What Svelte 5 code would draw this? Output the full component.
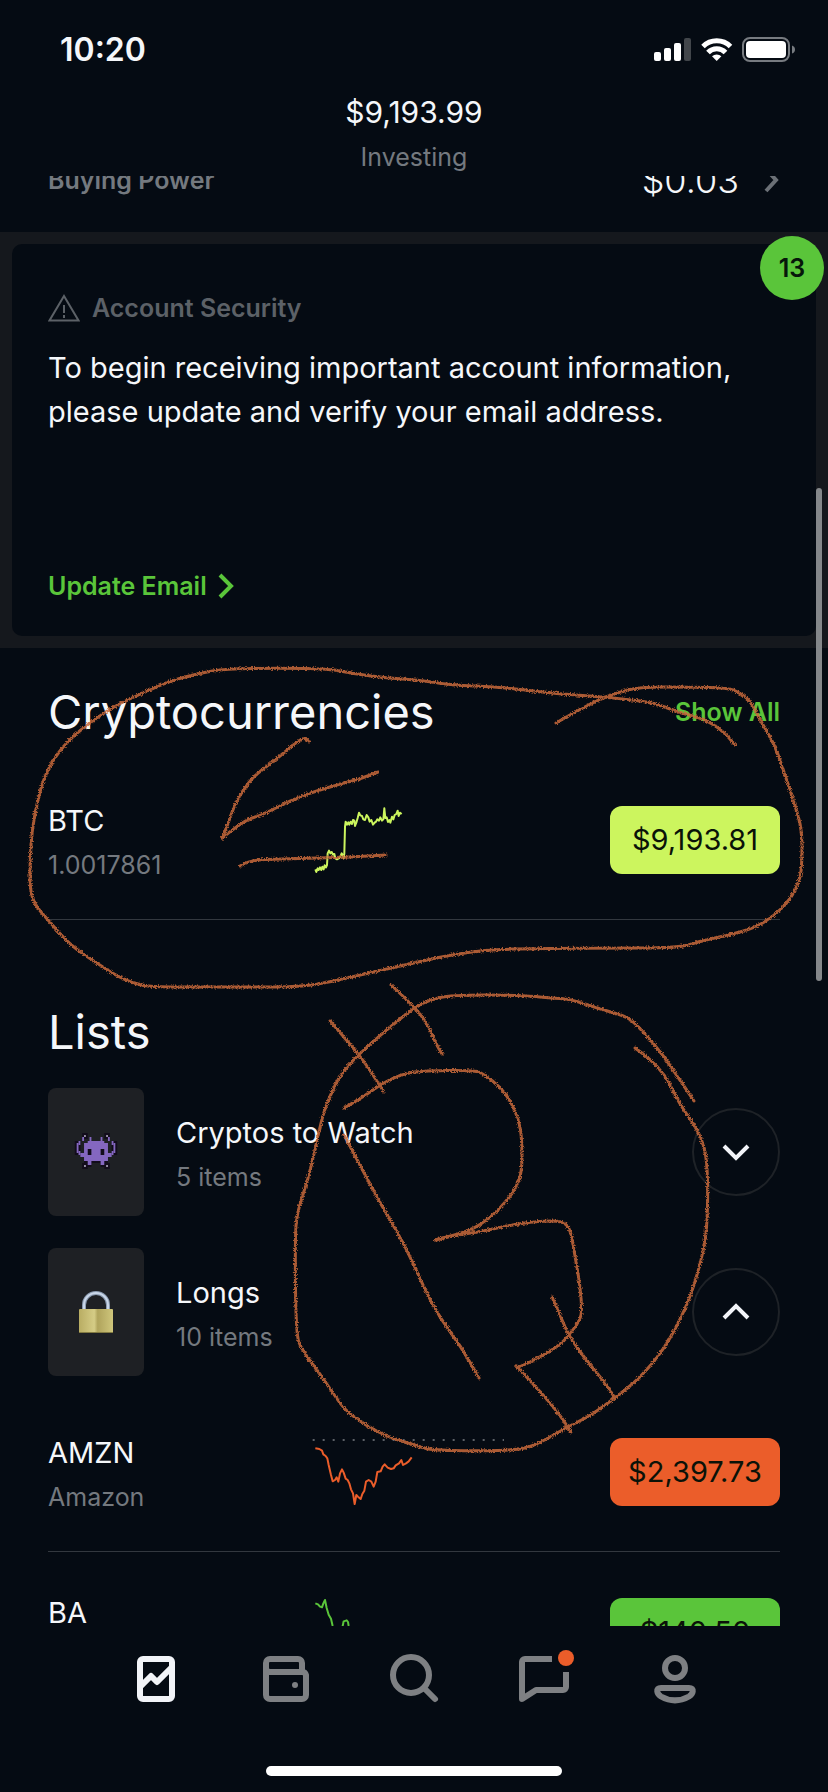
<!-- App.svelte - Portfolio screen with watch lists and pencil notes on top -->
<script>
  const account = { value: '$9,193.99', label: 'Investing', buyingPower: '$0.03' };

  const cryptos = [
    {
      symbol: 'BTC',
      detail: '1.0017861',
      price: '$9,193.81',
      tone: 'lime',
      viewBox: '33 48 576 204',
      line: '43,238 46,246 50,235 53,240 57,232 61,240 64,230 68,238 71,226 75,232 78,225 80,190 84,182 88,190 92,186 96,194 100,192 103,205 108,208 112,206 117,202 122,190 125,195 128,205 130,190 132,110 134,95 138,104 142,97 145,104 149,95 153,102 156,90 160,92 162,108 166,98 170,84 174,68 178,76 183,78 187,88 192,90 197,75 202,82 206,95 211,90 216,104 221,98 225,95 229,88 234,92 238,82 243,92 247,88 250,55 253,84 257,82 261,96 265,90 268,98 273,80 277,88 281,75 286,72 290,62 293,78 297,68 302,72'
    }
  ];

  let lists = $state([
    { name: 'Cryptos to Watch', count: '5 items', icon: 'alien', open: false },
    { name: 'Longs', count: '10 items', icon: 'lock', open: true }
  ]);

  const stocks = [
    {
      symbol: 'AMZN',
      detail: 'Amazon',
      price: '$2,397.73',
      tone: 'orange',
      dotted: true,
      viewBox: '0 0 576 204',
      line: '10,31 22,33 30,38 34,49 41,54 46,61 50,81 57,111 62,130 69,126 74,118 79,131 84,106 90,94 95,104 101,122 107,126 112,136 117,154 123,166 128,198 133,171 138,176 146,183 151,168 157,158 162,131 170,126 178,131 185,146 191,131 196,102 206,100 212,86 218,79 227,89 237,93 245,91 251,82 261,76 268,66 273,81 282,76 290,70 299,58'
    },
    {
      symbol: 'BA',
      detail: 'Boeing',
      price: '$140.50',
      tone: 'green',
      viewBox: '0 0 576 204',
      line: '10,16 18,19 24,26 30,28 34,16 39,6 44,30 50,50 57,62 62,84 72,112 80,112 92,84 95,70 104,67 108,72 110,84 122,124 150,136'
    }
  ];

  // Alien sprite, one entry per rectangle: x, y, width, height
  const alienBody = [
    [8, 4, 9, 2], [6, 5, 13, 3], [6, 8, 2, 4], [10, 8, 5, 4], [17, 8, 2, 4],
    [6, 11, 13, 3], [4, 10, 3, 2], [18, 10, 3, 2], [2, 5, 1, 5], [22, 5, 1, 5],
    [3, 4, 1, 2], [21, 4, 1, 2], [3, 9, 1, 2], [21, 9, 1, 2], [9, 2, 1, 2],
    [15, 2, 1, 2], [5, 2, 1, 2], [19, 2, 1, 2], [8, 14, 2, 2], [15, 14, 2, 2]
  ];
  const alienShadow = [
    [5, 0, 3, 3], [17, 0, 3, 3], [1, 4, 3, 7], [21, 4, 3, 7], [6, 13, 13, 2],
    [7, 15, 3, 2], [15, 15, 3, 2], [5, 15, 3, 3], [17, 15, 3, 3], [8, 8, 2, 4], [15, 8, 2, 4]
  ];
  const alienDots = [[6, 1], [18, 1], [6, 16], [18, 16]];

  // Hand drawn strokes over the screen
  const strokes = [
    '735,745 724,731 702,718 680,713 655,703 625,699 590,696 550,693 500,687 450,685 420,680 385,678 350,673 330,669 280,668 225,669 200,673 170,681 150,690 118,704 95,719 68,740 48,767 38,797 32,830 30,860 30,890 35,905 48,920 70,945 95,962 120,978 142,986 165,987 230,987 300,987 330,982 360,975 405,965 440,957 470,952 500,949 600,948 680,948 700,941 725,936 755,928 775,915 790,900 800,880 802,862 802,830 795,805 785,775 775,745 760,720 750,700 738,692 728,688 690,687 640,687 620,692 600,699 575,712 556,723',
    '309,742 306,737 298,741 285,752 270,764 255,775 243,790 234,806 228,824 222,838',
    '222,838 232,830 248,819 262,815 300,796 340,784 360,779 378,772',
    '240,866 250,860 280,859 320,858 350,857 386,855',
    '694,1101 670,1065 655,1045 635,1023 625,1016 600,1009 570,999 550,998 520,995 450,995 430,1000 415,1007 385,1031 358,1055 340,1075 330,1096 323,1114 316,1145 308,1180 297,1212 295,1240 296,1335 302,1350 320,1374 335,1396 345,1410 365,1425 390,1438 415,1445 430,1450 475,1451 520,1450 540,1443 567,1427 590,1416 615,1398 640,1378 665,1348 685,1310 696,1280 706,1240 708,1200 707,1160 702,1140 695,1126 683,1109 675,1095 665,1075 650,1059 635,1048',
    '344,1108 360,1099 383,1083 400,1075 418,1071 475,1070 485,1075 500,1087 510,1100 519,1120 522,1140 522,1172 516,1188 505,1203 490,1218 470,1231 435,1240',
    '435,1240 455,1235 480,1232 510,1225 540,1221 562,1221 570,1228 574,1250 580,1285 582,1310 580,1320 570,1334 560,1345 540,1357 520,1367 516,1366',
    '516,1366 540,1391 560,1415 571,1432',
    '344,1135 360,1165 380,1203 405,1245 425,1290 440,1318 460,1345 479,1378',
    '552,1297 562,1320 570,1338 590,1365 603,1380 615,1398',
    '330,1021 358,1053 373,1075 384,1092',
    '391,985 415,1007 428,1025 435,1042 442,1054'
  ];

  // Turn a point list into a curve that runs through the midpoints
  function smooth(list) {
    const points = list.split(' ').map((p) => p.split(',').map(Number));
    let d = `M${points[0]}`;
    for (let i = 1; i < points.length - 1; i++) {
      const [x, y] = points[i];
      const [nx, ny] = points[i + 1];
      d += `Q${x} ${y} ${(x + nx) / 2} ${(y + ny) / 2}`;
    }
    return d + `L${points[points.length - 1]}`;
  }
</script>

{#snippet quote(item)}
  <div class="quote">
    <div class="names">
      <span class="name">{item.symbol}</span>
      <span class="sub">{item.detail}</span>
    </div>
    <svg class="spark {item.tone}" viewBox={item.viewBox} aria-hidden="true">
      {#if item.dotted}
        <line class="dots" x1="2" y1="6" x2="576" y2="6" />
      {/if}
      <polyline points={item.line} />
    </svg>
    <button class="price {item.tone}">{item.price}</button>
  </div>
{/snippet}

<div class="screen">
  <header>
    <div class="status-bar">
      <span class="time">10:20</span>
      <svg class="status-icons" viewBox="0 0 142 26" aria-hidden="true">
        <rect x="0" y="15" width="7" height="9" rx="2" fill="#fff" />
        <rect x="10" y="11" width="7" height="13" rx="2" fill="#fff" />
        <rect x="20" y="6" width="7" height="18" rx="2" fill="#fff" />
        <rect x="30" y="1" width="7" height="23" rx="2" fill="#42464b" />
        <g fill="none" stroke="#fff" stroke-width="5">
          <path d="M49 9.5a19.5 19.5 0 0 1 27.5 0" />
          <path d="M54 15.5a12 12 0 0 1 17.5 0" />
        </g>
        <path d="M62.7 24l-4.7-4.8a7 7 0 0 1 9.4 0z" fill="#fff" />
        <rect x="89" y="1" width="46" height="23" rx="7" fill="none" stroke="#777b80" stroke-width="2" />
        <rect x="92" y="4" width="40" height="17" rx="4" fill="#fff" />
        <path d="M138 8.5q3 1 3 4t-3 4z" fill="#777b80" />
      </svg>
    </div>
    <div class="total">{account.value}</div>
    <div class="total-label">{account.label}</div>
  </header>

  <main>
    <div class="content">
      <a class="buying-power" href="#buying-power">
        <span class="power-label">Buying Power</span>
        <span class="power-value">{account.buyingPower}</span>
        <svg width="16" height="26" viewBox="0 0 16 26" fill="none" aria-hidden="true">
          <path d="M2 2l10 11-10 11" stroke="#6b7076" stroke-width="4" />
        </svg>
      </a>

      <section class="band">
        <div class="card">
          <h3>
            <svg width="32" height="28" viewBox="0 0 32 28" fill="none" aria-hidden="true">
              <path d="M16 2L30.5 26.5H1.5z" stroke="#5c6167" stroke-width="2" />
              <path d="M16 11v8M16 21v3" stroke="#5c6167" stroke-width="2" />
            </svg>
            Account Security
          </h3>
          <p>To begin receiving important account information, please update and verify your email address.</p>
          <a class="update" href="#update-email">
            Update Email
            <svg width="18" height="26" viewBox="0 0 18 26" fill="none" aria-hidden="true">
              <path d="M3 2l11 11L3 24" stroke="currentColor" stroke-width="4" />
            </svg>
          </a>
        </div>
        <span class="badge">13</span>
      </section>

      <section class="group">
        <div class="group-head">
          <h2>Cryptocurrencies</h2>
          <a href="#all">Show All</a>
        </div>
        {#each cryptos as item}
          {@render quote(item)}
        {/each}
      </section>

      <section class="group lists">
        <h2>Lists</h2>
        {#each lists as list}
          <div class="list">
            <div class="tile">
              {#if list.icon === 'alien'}
                <svg width="46" height="38" viewBox="0 0 25 19" preserveAspectRatio="none" aria-hidden="true">
                  {#each alienShadow as [x, y, w, h]}
                    <rect {x} {y} width={w} height={h} fill="#120c1b" />
                  {/each}
                  {#each alienBody as [x, y, w, h]}
                    <rect {x} {y} width={w} height={h} fill="#8467c0" />
                  {/each}
                  {#each alienDots as [x, y]}
                    <rect {x} {y} width="1" height="1" fill="#9a93a8" />
                  {/each}
                </svg>
              {:else}
                <svg width="36" height="42" viewBox="0 0 36 42" aria-hidden="true">
                  <defs>
                    <linearGradient id="brass">
                      <stop offset="0" stop-color="#b9ad63" />
                      <stop offset="0.45" stop-color="#d5cc86" />
                      <stop offset="0.55" stop-color="#b0a45c" />
                      <stop offset="1" stop-color="#cfc67c" />
                    </linearGradient>
                  </defs>
                  <path d="M6 20v-6a12 12 0 0 1 24 0v6" fill="none" stroke="#8b9bb0" stroke-width="4" />
                  <path d="M6 20v-6a12 12 0 0 1 24 0v6" fill="none" stroke="#c9d6e8" stroke-width="2" />
                  <rect x="1" y="18" width="34" height="24" rx="1" fill="url(#brass)" />
                  <path d="M1 41.5h34" stroke="#827a42" />
                </svg>
              {/if}
            </div>
            <div class="names">
              <span class="name">{list.name}</span>
              <span class="sub">{list.count}</span>
            </div>
            <button
              class="toggle"
              aria-expanded={list.open}
              aria-label={list.name}
              onclick={() => (list.open = !list.open)}
            >
              <svg width="28" height="18" viewBox="0 0 28 18" fill="none" aria-hidden="true">
                <path
                  d={list.open ? 'M2 15L14 3l12 12' : 'M2 3l12 12L26 3'}
                  stroke="#f2f4f8"
                  stroke-width="4"
                />
              </svg>
            </button>
          </div>
        {/each}
      </section>

      <section class="group">
        {#each stocks as item}
          {@render quote(item)}
        {/each}
      </section>
    </div>
  </main>

  <nav>
    <div class="tabs">
      <a href="#investing" class="active" aria-label="Investing">
        <svg width="56" height="56" viewBox="-1 0 56 56">
          <rect x="12" y="7" width="32" height="40" rx="3" />
          <path d="M12 35l11-11 6 6 14-14" />
        </svg>
      </a>
      <a href="#cash" aria-label="Cash">
        <svg width="56" height="56" viewBox="-2 0 56 56">
          <path d="M8 16V11a4 4 0 0 1 4-4h28a4 4 0 0 1 4 4v8" />
          <path d="M8 14v29a4 4 0 0 0 4 4h32a4 4 0 0 0 4-4V23a4 4 0 0 0-4-3H12a4 4 0 0 1-4-4" />
          <circle class="solid" cx="37" cy="33" r="3" />
        </svg>
      </a>
      <a href="#search" aria-label="Search">
        <svg width="56" height="56" viewBox="0 0 56 56">
          <circle cx="25" cy="23" r="18" />
          <path d="M38 36l11 11" stroke-linecap="round" />
        </svg>
      </a>
      <a href="#messages" aria-label="Messages">
        <svg width="56" height="56" viewBox="0 0 56 56">
          <path d="M36 7H9a3 3 0 0 0-3 3v37l14-9h27a3 3 0 0 0 3-3V20" />
          <circle class="alert" cx="50" cy="6" r="8" />
        </svg>
      </a>
      <a href="#account" aria-label="Account">
        <svg width="56" height="56" viewBox="-2 0 56 56">
          <circle cx="28" cy="16" r="10" />
          <path d="M14 36h28c6 0 4 6 0 8.500-9 5-19 5-28 0C10 42 8 36 14 36z" />
        </svg>
      </a>
    </div>
    <div class="home-bar"></div>
  </nav>

  <div class="scroll-thumb"></div>

  <svg class="pencil" viewBox="0 0 828 1792" preserveAspectRatio="xMidYMin meet" aria-hidden="true">
    <filter id="grain" x="0" y="0" width="828" height="1792" filterUnits="userSpaceOnUse">
      <feTurbulence type="fractalNoise" baseFrequency="0.8" numOctaves="2" seed="4" result="noise" />
      <feDisplacementMap in="SourceGraphic" in2="noise" scale="4" xChannelSelector="R" yChannelSelector="G" />
    </filter>
    <g filter="url(#grain)">
      {#each strokes as stroke}
        <path d={smooth(stroke)} />
      {/each}
    </g>
  </svg>
</div>

<style>
  :global(body) {
    background: #050b13;
  }

  .screen {
    position: relative;
    display: flex;
    flex-direction: column;
    height: 100vh;
    overflow: hidden;
    background: #050b13;
    color: #f5f7fa;
    font-family: Inter, "Liberation Sans", sans-serif;
    font-size: 29px;
    line-height: 44px;
  }

  h2,
  h3,
  p {
    margin: 0;
    font-weight: 400;
  }

  a {
    color: inherit;
    text-decoration: none;
  }

  button {
    font: inherit;
    border: none;
    cursor: pointer;
  }

  svg {
    display: block;
    flex-shrink: 0;
  }

  /* Header */
  header {
    flex-shrink: 0;
    text-align: center;
  }

  .status-bar {
    display: flex;
    align-items: center;
    justify-content: space-between;
    height: 80px;
    padding: 10px 32px 0 60px;
  }

  .time {
    font-size: 32px;
    font-weight: 600;
  }

  .status-icons {
    width: 142px;
    height: 26px;
  }

  .total {
    font-size: 30px;
  }

  .total-label {
    padding-top: 4px;
    color: #74797f;
    font-size: 25px;
    line-height: 38px;
  }

  /* Scrolled page body */
  main {
    flex: 1;
    min-height: 0;
    overflow: hidden;
  }

  .content {
    margin-top: -48px;
  }

  .buying-power {
    display: flex;
    align-items: center;
    height: 104px;
    padding: 0 48px;
  }

  .power-label {
    color: #74797f;
    font-size: 25px;
    font-weight: 600;
  }

  .power-value {
    margin-left: auto;
    margin-right: 25px;
    font-size: 36px;
    font-weight: 300;
  }

  .band {
    position: relative;
    padding: 12px;
    background: #15181d;
  }

  .card {
    box-sizing: border-box;
    display: flex;
    flex-direction: column;
    min-height: 392px;
    padding: 48px 36px 34px;
    border-radius: 10px;
    background: #050b13;
  }

  h3 {
    display: flex;
    align-items: center;
    gap: 12px;
    margin-bottom: 22px;
    color: #5c6167;
    font-size: 25px;
    line-height: 32px;
    font-weight: 600;
  }

  .update {
    display: flex;
    align-items: center;
    gap: 10px;
    margin-top: auto;
    color: #5ac53a;
    font-size: 25px;
    line-height: 32px;
    font-weight: 600;
  }

  .badge {
    position: absolute;
    top: 4px;
    right: 4px;
    width: 64px;
    border-radius: 50%;
    background: #5ac53a;
    color: #06170a;
    font-size: 25px;
    line-height: 64px;
    font-weight: 600;
    text-align: center;
  }

  /* Groups */
  .group {
    padding: 0 48px;
  }

  .group-head {
    display: flex;
    align-items: center;
    justify-content: space-between;
    padding: 40px 0 24px;
  }

  .group-head a {
    color: #5ac53a;
    font-size: 25px;
    line-height: 48px;
    font-weight: 600;
  }

  h2 {
    font-size: 47px;
    line-height: 48px;
  }

  .quote {
    box-sizing: border-box;
    display: grid;
    grid-template-columns: 36% 1fr 170px;
    align-items: center;
    height: 160px;
    border-bottom: 1px solid #33383f;
  }

  .names {
    display: flex;
    flex-direction: column;
    padding-top: 6px;
  }

  .sub {
    color: #74797f;
    font-size: 25px;
  }

  .price {
    height: 68px;
    padding: 0;
    border-radius: 12px;
    color: #0a1208;
  }

  .price.lime {
    background: #ccf55e;
  }

  .price.orange {
    background: #eb5d2a;
  }

  .price.green {
    background: #5ac53a;
  }

  .spark {
    width: 192px;
    height: 68px;
    fill: none;
    stroke-width: 6;
    stroke-linejoin: round;
    overflow: visible;
  }

  .spark.lime {
    stroke: #ccf55e;
  }

  .spark.orange {
    stroke: #eb5d2a;
  }

  .spark.green {
    stroke: #5ac53a;
  }

  .dots {
    stroke: #5c6167;
    stroke-dasharray: 6 24;
  }

  .lists {
    display: flex;
    flex-direction: column;
    gap: 32px;
    padding-top: 88px;
    padding-bottom: 16px;
  }

  .list {
    display: flex;
    align-items: center;
    gap: 32px;
  }

  .tile {
    display: grid;
    place-items: center;
    width: 96px;
    height: 128px;
    border-radius: 8px;
    background: #1e2024;
  }

  .toggle {
    box-sizing: border-box;
    display: grid;
    place-items: center;
    width: 88px;
    height: 88px;
    margin-left: auto;
    padding: 0;
    border: 2px solid #1e2227;
    border-radius: 50%;
    background: none;
  }

  /* Tab bar */
  nav {
    box-sizing: border-box;
    display: flex;
    flex-direction: column;
    justify-content: space-between;
    align-items: center;
    flex-shrink: 0;
    height: 166px;
    padding: 26px 0 16px;
  }

  .tabs {
    display: flex;
    justify-content: space-around;
    box-sizing: border-box;
    width: 100%;
    padding: 0 90px;
  }

  .tabs svg {
    fill: none;
    stroke: #7e8083;
    stroke-width: 6;
    stroke-linejoin: round;
    overflow: visible;
  }

  .tabs .active svg {
    stroke: #f2f4f8;
  }

  .tabs .solid {
    fill: #7e8083;
    stroke: none;
  }

  .tabs .alert {
    fill: #eb5d2a;
    stroke: none;
  }

  .home-bar {
    width: 296px;
    height: 10px;
    border-radius: 5px;
    background: #fff;
  }

  /* Layers over the page */
  .scroll-thumb {
    position: absolute;
    top: 488px;
    right: 6px;
    width: 6px;
    height: 493px;
    border-radius: 3px;
    background: #84878a;
  }

  .pencil {
    position: absolute;
    top: 0;
    left: 0;
    width: 100%;
    fill: none;
    stroke: #c9693a;
    stroke-width: 3;
    stroke-linecap: round;
    stroke-linejoin: round;
    opacity: 0.85;
    pointer-events: none;
  }
</style>
